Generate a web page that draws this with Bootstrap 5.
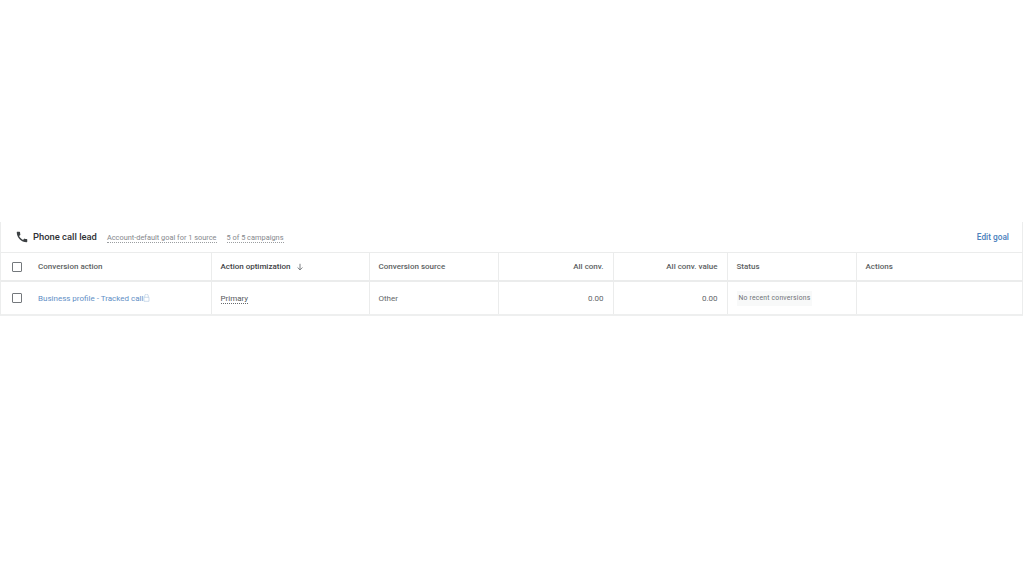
<!DOCTYPE html>
<html lang="en">
<head>
<meta charset="utf-8">
<title>Phone call lead</title>
<link href="https://cdn.jsdelivr.net/npm/bootstrap@5.3.0/dist/css/bootstrap.min.css" rel="stylesheet">
<style>
html,body{height:576px;overflow:hidden;background:#fff}
body{font-family:Roboto,"Liberation Sans",sans-serif;color:#3c4043;padding-top:222px}
.goal-panel{margin:0 1px 0 0;height:94px;border-left:1px solid #eceded;border-right:1px solid #eceded;border-bottom:2px solid #eeefef}
.goal-head{height:31px;padding:0 13px 0 14px;border-bottom:1px solid #ebecec}
.goal-title{font-size:9.400px;font-weight:500;color:#2f3134}
.goal-note{font-size:7.400px;color:#85888c;border-bottom:1px dotted #9a9da0;line-height:9px;margin-left:10px;padding-top:1px}
.goal-edit{font-size:8.300px;font-weight:500;color:#4a80bc;text-decoration:none}
.conv-table{table-layout:fixed;width:1022px;margin:0;border-collapse:collapse;--bs-table-color:#4a4d50;--bs-table-bg:transparent}
.conv-table th,.conv-table td{font-size:8px;padding:1px 9px 0;vertical-align:middle;border:0;border-left:1px solid #ebecec;box-shadow:none}
.conv-table th{height:28px;font-weight:500;border-bottom:2px solid #ebecec;color:#5c5f62}
.conv-table td{height:33px;color:#636669}
.conv-table th:first-child,.conv-table td:first-child{border-left:0;padding:0 0 0 11px}
.conv-table th:nth-child(2),.conv-table td:nth-child(2){border-left:0;padding-left:0}
.conv-table th.sorted{color:#404246}
.tick-box{display:block;width:10px;height:10px;border:1.400px solid #74787c;border-radius:1px}
.conv-link{color:#5f8fc6;text-decoration:none}
.primary-tag{color:#55585b;border-bottom:1px dotted #66696c;line-height:9px;display:inline-block}
.status-chip{display:inline-block;font-size:6.800px;letter-spacing:.2px;background:#f8f9f9;color:#6e7175;padding:3px 2px;line-height:9px}
</style>
</head>
<body>
<section class="goal-panel">
  <div class="goal-head d-flex align-items-center">
    <svg width="14" height="14" viewBox="0 0 24 24" class="me-1 flex-shrink-0" aria-hidden="true"><path fill="#3c4043" d="M20.010 15.380c-1.230 0-2.420-.2-3.530-.56a.977.977 0 0 0-1.010.24l-1.570 1.970c-2.830-1.350-5.480-3.900-6.890-6.830l1.950-1.660c.27-.28.35-.67.24-1.020-.37-1.110-.56-2.300-.56-3.530 0-.54-.45-.99-.99-.99H4.190C3.650 3 3 3.240 3 3.990 3 13.280 10.730 21 20.010 21c.71 0 .99-.63.99-1.180v-3.450c0-.54-.45-.99-.99-.99z"/></svg>
    <span class="goal-title">Phone call lead</span>
    <span class="goal-note">Account-default goal for 1 source</span>
    <span class="goal-note">5 of 5 campaigns</span>
    <a class="goal-edit ms-auto" href="#">Edit goal</a>
  </div>
  <table class="table conv-table">
    <colgroup><col style="width:37px"><col style="width:173px"><col style="width:158px"><col style="width:129px"><col style="width:115px"><col style="width:114px"><col style="width:129px"><col></colgroup>
    <thead>
      <tr>
        <th><span class="tick-box"></span></th>
        <th>Conversion action</th>
        <th class="sorted">Action optimization <svg width="8" height="8" viewBox="0 0 8 8" class="ms-1" aria-hidden="true"><path d="M4 .8v6M1.600 4.500 4 6.900l2.400-2.400" fill="none" stroke="#5f6368" stroke-width=".8"/></svg></th>
        <th>Conversion source</th>
        <th class="text-end">All conv.</th>
        <th class="text-end">All conv. value</th>
        <th>Status</th>
        <th>Actions</th>
      </tr>
    </thead>
    <tbody>
      <tr>
        <td><span class="tick-box"></span></td>
        <td><a class="conv-link" href="#">Business profile - Tracked call</a><svg width="7" height="8" viewBox="0 0 7 8" aria-hidden="true"><path d="M1.700 3.300V2a1.800 1.800 0 0 1 3.600 0v1.300M1 3.300h5v4H1z" fill="none" stroke="#b9cde3" stroke-width=".7"/></svg></td>
        <td><span class="primary-tag">Primary</span></td>
        <td>Other</td>
        <td class="text-end">0.00</td>
        <td class="text-end">0.00</td>
        <td><span class="status-chip">No recent conversions</span></td>
        <td></td>
      </tr>
    </tbody>
  </table>
</section>
<script src="https://cdn.jsdelivr.net/npm/bootstrap@5.3.0/dist/js/bootstrap.bundle.min.js"></script>
</body>
</html>
